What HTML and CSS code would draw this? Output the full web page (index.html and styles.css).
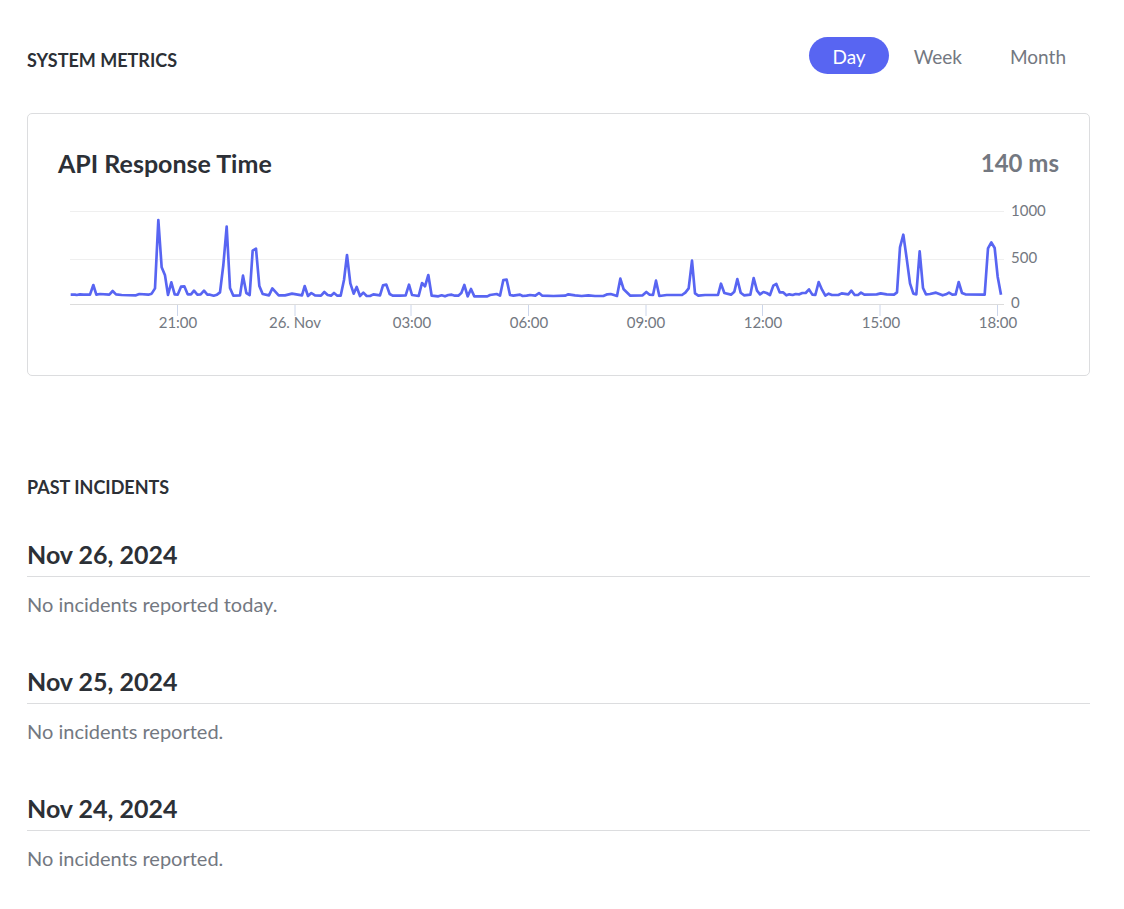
FILE: index.html
```html
<!DOCTYPE html>
<html lang="en">
<head>
<meta charset="utf-8">
<title>System Status</title>
<link rel="stylesheet" href="styles.css">
</head>
<body>
<main class="page">
  <section class="metrics">
    <header class="metrics-header">
      <h2 class="section-title">SYSTEM METRICS</h2>
      <div class="range" role="group" aria-label="Time range">
        <button class="range-button active" type="button" aria-pressed="true">Day</button>
        <button class="range-button" type="button" aria-pressed="false">Week</button>
        <button class="range-button" type="button" aria-pressed="false">Month</button>
      </div>
    </header>
    <article class="card">
      <div class="card-head">
        <h3 class="title">API Response Time</h3>
        <span class="title value">140 ms</span>
      </div>
      <svg class="chart" viewBox="0 0 1001 140" role="img" aria-label="API response time over the last day">
        <path class="grid" d="M12 11.5H946M12 59.5H946"/>
        <path class="tick" d="M119.5 104V116M237 104V116M353 104V116M470.5 104V116M588 104V116M704.5 104V116M822 104V116M939.5 104V116"/>
        <path class="axis" d="M12 104.5H946"/>
        <svg width="1001" height="140" viewBox="0 0 3003 420">
          <polyline class="series" points="38,284 51,284 56,285 66,283 76,284 96,284 106,255 115,284 126,282 154,284 164,273 174,283 191,285 234,286 244,282 271,284 281,281 291,265 301,60 311,202 321,226 330,285 340,247 350,283 359,284 369,260 379,259 389,283 399,283 408,272 418,284 428,283 438,272 448,284 456,284 467,287 477,284 486,277 496,195 506,80 516,264 526,287 546,286 555,227 565,279 575,285 584,152 594,146 604,258 614,282 633,286 643,265 662,286 681,286 702,281 732,286 740,258 750,288 760,279 771,286 789,287 799,276 809,285 819,287 828,279 838,287 848,287 858,240 867,165 877,250 887,281 896,261 906,288 916,278 926,288 936,288 946,283 966,286 975,256 985,254 995,282 1004,287 1026,287 1043,286 1053,254 1062,285 1082,288 1092,249 1101,259 1111,225 1121,287 1141,289 1151,286 1161,289 1171,285 1181,284 1191,287 1201,287 1210,279 1219,255 1229,289 1239,267 1249,289 1288,289 1296,285 1316,282 1326,287 1336,240 1346,239 1356,285 1366,287 1386,284 1394,288 1406,287 1416,285 1432,287 1443,279 1453,287 1486,288 1521,287 1531,283 1551,286 1571,288 1591,286 1611,288 1636,288 1648,283 1658,282 1668,285 1677,288 1687,236 1697,268 1717,287 1754,286 1765,276 1775,284 1785,285 1794,242 1804,288 1826,285 1872,285 1882,278 1892,265 1902,182 1911,280 1921,287 1941,285 1980,285 1989,251 1999,279 2019,284 2029,275 2038,237 2048,278 2058,286 2077,284 2087,234 2097,272 2106,283 2116,276 2126,279 2136,285 2146,257 2155,252 2165,277 2175,277 2185,286 2194,283 2204,285 2213,282 2224,283 2233,279 2243,279 2253,268 2263,284 2272,285 2282,246 2292,269 2302,287 2312,281 2322,285 2341,285 2351,280 2371,283 2380,272 2390,285 2400,285 2409,278 2419,284 2456,283 2468,280 2486,283 2508,284 2517,277 2526,142 2536,104 2546,175 2556,250 2566,281 2575,283 2585,154 2595,264 2604,283 2616,282 2634,278 2654,286 2664,283 2673,278 2683,284 2693,283 2702,246 2712,279 2722,283 2780,284 2790,145 2800,127 2810,144 2819,230 2829,284"/>
        </svg>
        <g class="label">
          <text x="953" y="16">1000</text>
          <text x="953" y="63">500</text>
          <text x="953" y="108">0</text>
        </g>
        <g class="label time">
          <text x="120" y="128">21:00</text>
          <text x="237" y="128">26. Nov</text>
          <text x="354" y="128">03:00</text>
          <text x="471" y="128">06:00</text>
          <text x="588" y="128">09:00</text>
          <text x="705" y="128">12:00</text>
          <text x="823" y="128">15:00</text>
          <text x="940" y="128">18:00</text>
        </g>
      </svg>
    </article>
  </section>
  <section class="incidents">
    <h2 class="section-title">PAST INCIDENTS</h2>
    <article class="day">
      <h3 class="title date">Nov 26, 2024</h3>
      <p class="message">No incidents reported today.</p>
    </article>
    <article class="day">
      <h3 class="title date">Nov 25, 2024</h3>
      <p class="message">No incidents reported.</p>
    </article>
    <article class="day">
      <h3 class="title date">Nov 24, 2024</h3>
      <p class="message">No incidents reported.</p>
    </article>
  </section>
</main>
</body>
</html>
```
FILE: styles.css
```css
* { box-sizing: border-box; }
body {
  margin: 0;
  background: #fff;
  color: #2c3036;
  font-family: Lato, "Liberation Sans", sans-serif;
}
h2, h3, p { margin: 0; }
.page { padding: 37px 34px 32px 27px; }
.metrics-header {
  display: flex;
  justify-content: space-between;
  align-items: flex-start;
  margin-bottom: 39px;
}
.section-title {
  padding-top: 11px;
  font-size: 18px;
  line-height: 24px;
  font-weight: 700;
}
.range { display: flex; gap: 2px; padding-right: 1px; }
.range-button {
  height: 37px;
  padding: 2px 23px 0;
  border: 0;
  border-radius: 19px;
  background: none;
  color: #737881;
  font: 400 19px/28px Lato, "Liberation Sans", sans-serif;
  cursor: pointer;
}
.range-button.active { background: #5865f2; color: #fff; }
.card {
  padding: 30px 30px 35px;
  border: 1px solid #dcdddf;
  border-radius: 5px;
}
.card-head { display: flex; justify-content: space-between; margin-bottom: 18px; }
.title { font-size: 25px; line-height: 38px; font-weight: 700; }
.value { color: #737881; font-size: 24px; }
.chart { display: block; width: 100%; }
.grid, .tick, .axis, .series { fill: none; }
.grid { stroke: #efefef; stroke-width: 1; }
.tick { stroke: #ccd6eb; stroke-width: 1; }
.axis { stroke: #dcdcdc; stroke-width: 1; }
.series { stroke: #5865f2; stroke-width: 8; stroke-linejoin: round; }
.label { fill: #737881; font-size: 15px; }
.time { text-anchor: middle; }
.incidents { padding-top: 88px; }
.day { padding-top: 36px; margin-bottom: 8px; }
.date { padding-bottom: 3px; border-bottom: 1px solid #dcdddf; }
.message { padding-top: 13px; color: #737881; font-size: 20px; line-height: 28px; }
```
